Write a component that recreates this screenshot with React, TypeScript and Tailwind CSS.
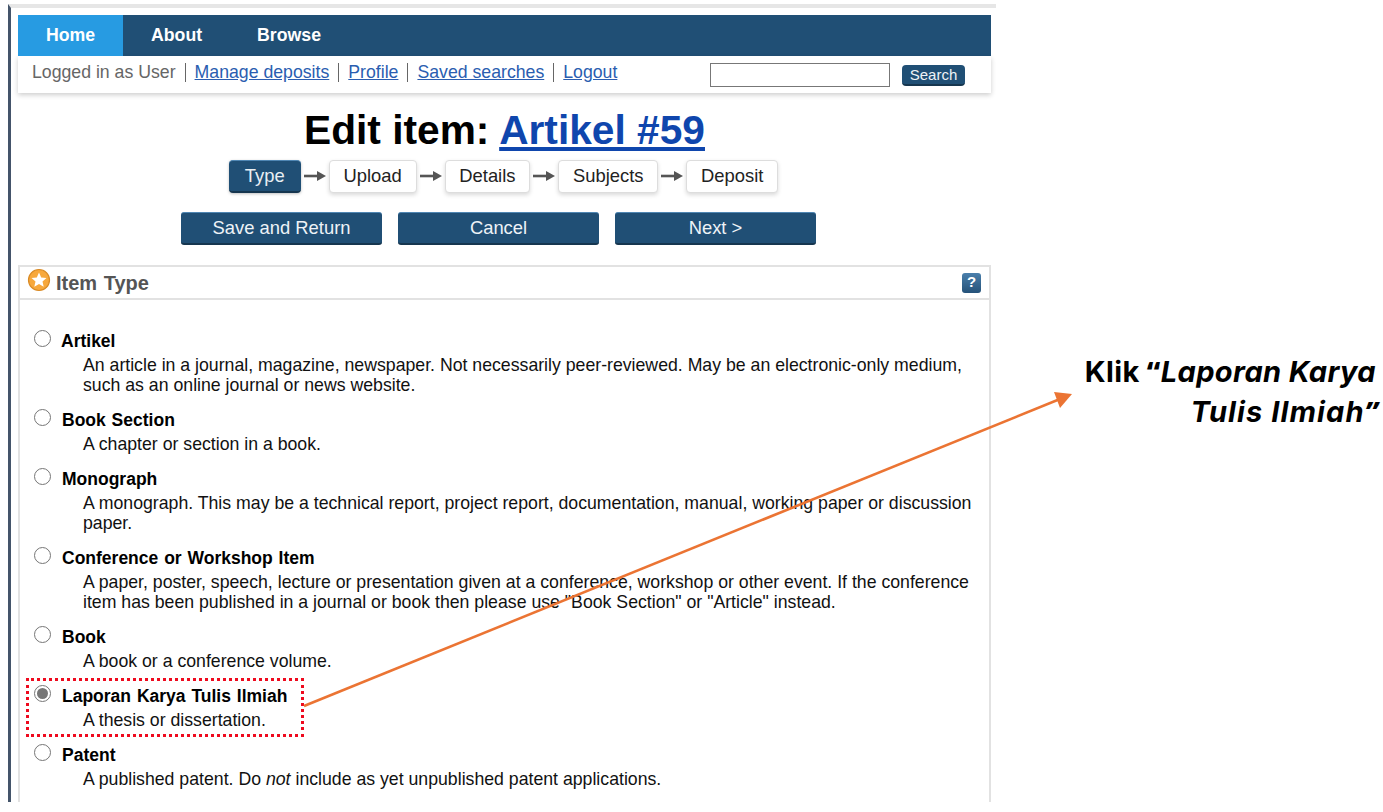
import React from "react";

const items: { title: React.ReactNode; desc: React.ReactNode; checked?: boolean }[] = [
  { title: "Artikel", desc: <>An article in a journal, magazine, newspaper. Not necessarily peer-reviewed. May be an electronic-only medium,<br />such as an online journal or news website.</> },
  { title: "Book Section", desc: "A chapter or section in a book." },
  { title: "Monograph", desc: <>A monograph. This may be a technical report, project report, documentation, manual, working paper or discussion<br />paper.</> },
  { title: "Conference or Workshop Item", desc: <>A paper, poster, speech, lecture or presentation given at a conference, workshop or other event. If the conference<br />item has been published in a journal or book then please use "Book Section" or "Article" instead.</> },
  { title: "Book", desc: "A book or a conference volume." },
  { title: "Laporan Karya Tulis Ilmiah", desc: "A thesis or dissertation.", checked: true },
  { title: "Patent", desc: <>A published patent. Do <em>not</em> include as yet unpublished patent applications.</> },
];

const steps = ["Type", "Upload", "Details", "Subjects", "Deposit"];

function Sep() {
  return <span className="mx-[9px] inline-block h-[19px] w-px bg-[#666]" />;
}

function Arrow() {
  return (
    <svg width="28" height="16" viewBox="0 0 28 16" className="shrink-0">
      <path d="M3 8H19" stroke="#555" strokeWidth="2.6" />
      <path d="M16 3L25 8L16 13Z" fill="#555" />
    </svg>
  );
}

export default function App() {
  return (
    <div className="relative h-[812px] w-[1383px] overflow-hidden bg-white font-['Liberation_Sans',Arial,sans-serif] text-black">
      <div className="ml-[8px] mt-[4px] h-[798px] w-[988px] overflow-hidden border-l-[3px] border-t-[4px] border-l-[#44546a] border-t-[#e6e6e6] pl-[7px] pt-[7px]">
        <div className="w-[973px]">
          <nav className="flex h-[41px] items-center bg-[#204f75] text-[17.7px] font-bold text-white">
            <a className="flex h-full w-[105px] items-center justify-center bg-[#279be2]">Home</a>
            <a className="ml-[28px]">About</a>
            <a className="ml-[55px]">Browse</a>
          </nav>
          <div className="flex h-[37px] items-start bg-white pl-[14px] shadow-[0_2px_5px_rgba(0,0,0,0.2)]">
            <div className="mt-[5px] flex items-center text-[17.7px] leading-[22px] text-[#666]">
              <span>Logged in as User</span>
              <Sep />
              <a className="text-[#2a5db0] underline">Manage deposits</a>
              <Sep />
              <a className="text-[#2a5db0] underline">Profile</a>
              <Sep />
              <a className="text-[#2a5db0] underline">Saved searches</a>
              <Sep />
              <a className="text-[#2a5db0] underline">Logout</a>
            </div>
            <input className="ml-auto mt-[7px] h-[24px] w-[180px] border border-[#777] bg-white" aria-label="Search" />
            <button className="ml-[12px] mr-[26px] mt-[9px] h-[21px] w-[63px] rounded-[4px] border-b-2 border-b-[#16364f] bg-[#204f75] text-[15px] leading-[18px] text-[#eef3f7]">Search</button>
          </div>

          <h1 className="mt-[9px] h-[56px] text-center text-[40.7px] font-bold leading-[56px]">
            Edit item: <a className="text-[#0f46ad] underline">Artikel #59</a>
          </h1>

          <div className="mt-[1px] flex h-[34px] items-center justify-center pr-[2px]">
            {steps.map((s, i) => (
              <React.Fragment key={s}>
                {i > 0 && <Arrow />}
                {i === 0 ? (
                  <div className="flex h-[33px] items-center rounded-[4px] border-b-2 border-t border-b-[#16364f] border-t-[#4f86b3] bg-[#204f75] px-[16px] text-[18.4px] text-[#e8eef3] shadow-[0_1px_3px_rgba(0,0,0,0.25)]">{s}</div>
                ) : (
                  <div className="flex h-[33px] items-center rounded-[4px] border border-[#ddd] bg-white px-[13.75px] text-[18.4px] text-[#222] shadow-[0_2px_4px_rgba(0,0,0,0.15)]">{s}</div>
                )}
              </React.Fragment>
            ))}
          </div>

          <div className="mt-[19px] flex justify-center gap-[16px] pr-[12px]">
            {["Save and Return", "Cancel", "Next >"].map((b) => (
              <button key={b} className="h-[33px] w-[201px] rounded-[3px] border-b-2 border-t border-b-[#16364f] border-t-[#4f86b3] bg-[#204f75] text-[18.4px] text-[#eef3f7]">{b}</button>
            ))}
          </div>

          <section className="mt-[20px] border-2 border-[#e2e2e2] bg-white">
            <header className="flex h-[33px] items-center border-b-2 border-[#e2e2e2] pl-[7px] pr-[8px]">
              <svg width="24" height="24" viewBox="0 0 24 24" className="mb-[5px] shrink-0">
                <circle cx="12" cy="12" r="10.5" fill="#f7a83c" stroke="#d98a24" strokeWidth="1.2" />
                <path d="M12 4.5L14.2 9.4L19.5 10L15.5 13.5L16.7 18.7L12 16L7.3 18.7L8.5 13.5L4.5 10L9.8 9.4Z" fill="#fff" />
              </svg>
              <h2 className="ml-[5px] text-[20px] font-bold text-[#555] [word-spacing:1px]">Item Type</h2>
              <span className="ml-auto flex h-[20px] w-[19px] items-center justify-center rounded-[3px] bg-linear-to-b from-[#4a7fab] to-[#255279] text-[15px] font-bold text-white">?</span>
            </header>
            <div className="pl-[14px] pt-[29px]">
              {items.map((it, idx) => (
                <div key={idx} className="pb-[13px]">
                  <div className="flex h-[24px] items-center">
                    <span className="mb-[5px] flex h-[17px] w-[17px] shrink-0 items-center justify-center rounded-full border-[1.5px] border-[#767676] bg-white">
                      {it.checked && <span className="h-[11px] w-[11px] rounded-full bg-[#767676]" />}
                    </span>
                    <span className={`text-[17.5px] font-bold [word-spacing:1px] ${idx === 0 ? "ml-[10px]" : "ml-[11px]"}`}>{it.title}</span>
                  </div>
                  <p className="mt-[2px] pl-[49px] text-[17.72px] leading-[20px] text-[#111]">{it.desc}</p>
                </div>
              ))}
            </div>
          </section>
        </div>
      </div>

      {/* annotations */}
      <div className="absolute left-[26px] top-[678px] h-[59px] w-[278px] border-[3px] border-dotted border-[#ee0a1e]" />
      <svg className="absolute left-0 top-0" width="1383" height="812" viewBox="0 0 1383 812">
        <path d="M304 706L1060 399" stroke="#eb7433" strokeWidth="2.6" fill="none" />
        <path d="M1072 394L1054 392L1060 408Z" fill="#eb7433" />
      </svg>
      <div className="absolute right-[4px] top-[351px] text-right font-['Inter',sans-serif] text-[29px] font-bold leading-[39px]">
        <div className="pr-[3px] tracking-[0.35px]">Klik <span className="font-['Noto_Sans',sans-serif] font-extrabold">“</span><em>Laporan Karya</em></div>
        <div className="tracking-[1.1px]"><em>Tulis Ilmiah</em><em className="font-['Noto_Sans',sans-serif] font-extrabold">”</em></div>
      </div>
    </div>
  );
}
